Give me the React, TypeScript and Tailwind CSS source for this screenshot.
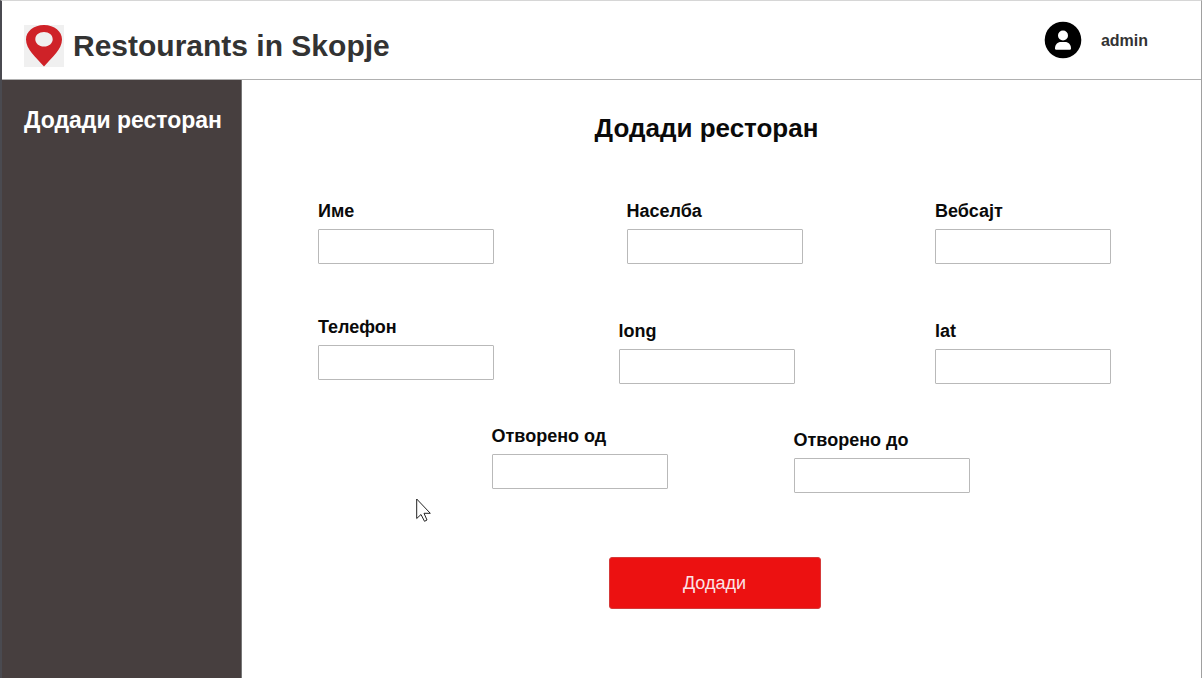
import React from "react";

type FieldProps = { id: string; label: string; className?: string };

function Field({ id, label, className = "" }: FieldProps) {
  return (
    <div className={`flex w-44 flex-col gap-1.5 ${className}`}>
      <label htmlFor={id} className="text-lg leading-6 font-bold text-[#0a0a0a]">
        {label}
      </label>
      <input
        id={id}
        type="text"
        className="h-[35px] w-full rounded-[1px] border border-[#b9b9b9] bg-white px-2 text-base outline-none"
      />
    </div>
  );
}

function PinLogo() {
  return (
    <svg viewBox="0 0 40 42" className="h-[42px] w-10 shrink-0 bg-[#f0f0f0]" aria-hidden="true">
      <path
        fill="#cf2228"
        fillRule="evenodd"
        d="M20 0C9.500 0 2 6.500 2 14.500C2 24 11.500 32 20 41.500C28.500 32 38 24 38 14.500C38 6.500 30.500 0 20 0ZM20 7C25 7 28.700 10 28.700 14.200C28.700 18.300 25 21.500 20 21.500C15 21.500 11.300 18.300 11.300 14.200C11.300 10 15 7 20 7Z"
      />
    </svg>
  );
}

function Avatar() {
  return (
    <svg viewBox="0 0 38 38" className="size-[38px]" aria-hidden="true">
      <circle cx="19" cy="19" r="18.300" fill="#000" />
      <circle cx="19" cy="14.500" r="5" fill="#fff" />
      <path d="M11 27.500C11 23.500 13.500 21 17 21H21C24.500 21 27 23.500 27 27.500Q27 28.800 25.800 28.800H12.200Q11 28.800 11 27.500Z" fill="#fff" />
    </svg>
  );
}

function Pointer() {
  return (
    <svg viewBox="0 0 16 25" className="pointer-events-none absolute top-[497px] left-[414px] h-[25px] w-4" aria-hidden="true">
      <path
        d="M.7 1V20.500L5 16.500L8.500 23.300L11 22L8 15.300H14.300Z"
        fill="#fff"
        stroke="#222"
        strokeWidth="1"
      />
    </svg>
  );
}

export default function App() {
  return (
    <div className="relative flex min-h-screen flex-col border-t border-r border-l-2 border-t-[#d6d6d6] border-r-[#a0a0a0] border-l-[#4a4a50] bg-white font-['Liberation_Sans',Arial,sans-serif]">
      <header className="flex h-[79px] items-center justify-between border-b border-[#b0b0b0] pr-[53px] pl-[22px]">
        <div className="flex items-center gap-[9px] pt-3">
          <PinLogo />
          <span className="text-[30px] leading-9 font-bold text-[#333]">Restourants in Skopje</span>
        </div>
        <div className="flex items-center gap-[19px]">
          <Avatar />
          <span className="pt-0.5 text-base font-bold text-[#333]">admin</span>
        </div>
      </header>

      <div className="flex flex-1">
        <aside className="w-60 shrink-0 border-r border-[#777] bg-[#473f3f] px-[22px] pt-6">
          <a href="#add" className="text-[23px] leading-8 font-bold whitespace-nowrap text-white">
            Додади ресторан
          </a>
        </aside>

        <main className="flex-1 pt-8 pr-[90px] pb-16 pl-[76px]">
          <h1 className="pr-4 text-center text-[26px] leading-8 font-bold text-[#0a0a0a]">Додади ресторан</h1>

          <form onSubmit={(e: React.FormEvent) => e.preventDefault()}>
            <div className="flex justify-between pt-[55px]">
              <Field id="name" label="Име" />
              <Field id="district" label="Населба" />
              <Field id="website" label="Вебсајт" />
            </div>
            <div className="flex justify-between pt-[51px]">
              <Field id="phone" label="Телефон" />
              <Field id="long" label="long" className="mr-4 pt-1" />
              <Field id="lat" label="lat" className="pt-1" />
            </div>
            <div className="flex justify-center gap-[126px] pt-10 pl-8">
              <Field id="opens" label="Отворено од" />
              <Field id="closes" label="Отворено до" className="pt-1" />
            </div>
            <div className="flex justify-center pt-16">
              <button
                type="submit"
                className="h-[52px] w-[212px] rounded-[3px] border border-[#d53a3a] bg-[#ec1111] text-lg text-[#fbe3e6]"
              >
                Додади
              </button>
            </div>
          </form>
        </main>
      </div>

      <Pointer />
    </div>
  );
}
